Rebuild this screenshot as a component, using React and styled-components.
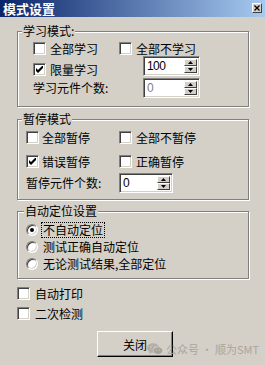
import React from "react";
import styled, { createGlobalStyle } from "styled-components";

const GlobalStyle = createGlobalStyle`
  html, body {
    margin: 0;
    padding: 0;
    background: #d4d0c8;
  }
  body {
    font-family: "Noto Sans CJK SC", "Liberation Sans", sans-serif;
    font-size: 12px;
    line-height: 14px;
    color: #000;
  }
`;

const Dialog = styled.div`
  position: relative;
  width: 265px;
  height: 365px;
  background: #d4d0c8;
  overflow: hidden;
`;

const TitleBar = styled.div`
  height: 17px;
  display: flex;
  align-items: center;
  justify-content: space-between;
  padding: 0 3px 0 3px;
  background: linear-gradient(to right, #0a246a, #a6caf0);
`;

const Title = styled.span`
  color: #fff;
  font-weight: bold;
  font-size: 13px;
  line-height: 17px;
`;

const CloseButton = styled.div`
  box-sizing: border-box;
  width: 10px;
  height: 10px;
  margin-top: -1px;
  background: #d4d0c8;
  border: 1px solid;
  border-color: #fff #404040 #404040 #fff;
  display: flex;
  align-items: center;
  justify-content: center;
`;

const Body = styled.div`
  display: flex;
  flex-direction: column;
  align-items: flex-start;
  padding: 14px 0 0 17px;
`;

const Group = styled.div`
  position: relative;
  box-sizing: border-box;
  width: 232px;
  height: ${(p) => p.$h}px;
  margin-top: ${(p) => p.$mt}px;
  padding: ${(p) => p.$pad};
  border: 1px solid #808080;
  box-shadow: inset 1px 1px 0 #fff, 1px 1px 0 #fff;
  display: flex;
  flex-direction: column;
`;

const Caption = styled.span`
  position: absolute;
  top: -7px;
  left: ${(p) => p.$left}px;
  padding: 0 1px;
  background: #d4d0c8;
  line-height: 12px;
  white-space: nowrap;
`;

const Row = styled.div`
  display: flex;
  align-items: ${(p) => p.$align || "center"};
  height: ${(p) => p.$h}px;
  margin-top: ${(p) => p.$mt || 0}px;
`;

const Cell = styled.div`
  display: flex;
  align-items: center;
  flex-shrink: 0;
  width: ${(p) => (p.$w ? `${p.$w}px` : "auto")};
  height: ${(p) => p.$h || 13}px;
`;

const Box = styled.span`
  box-sizing: border-box;
  width: 13px;
  height: 13px;
  flex-shrink: 0;
  background: #fff;
  border: 1px solid;
  border-color: #808080 #fff #fff #808080;
  box-shadow: inset 1px 1px 0 #404040, inset -1px -1px 0 #d4d0c8;
  display: flex;
  align-items: center;
  justify-content: center;
`;

const RadioDot = styled.span`
  box-sizing: border-box;
  width: 12px;
  height: 12px;
  flex-shrink: 0;
  border-radius: 50%;
  background: #fff;
  border: 1px solid;
  border-color: #808080 #fff #fff #808080;
  box-shadow: inset 1px 1px 0 #404040, inset -1px -1px 0 #d4d0c8;
  display: flex;
  align-items: center;
  justify-content: center;
  &::after {
    content: "";
    width: 4px;
    height: 4px;
    border-radius: 50%;
    background: ${(p) => (p.$on ? "#000" : "transparent")};
  }
`;

const Label = styled.span`
  margin-left: ${(p) => p.$gap || 0}px;
  white-space: nowrap;
`;

const FocusLabel = styled.span`
  margin-left: 3px;
  padding: 0 1px;
  height: 14px;
  line-height: 14px;
  border: 1px dotted ${(p) => (p.$focus ? "#000" : "transparent")};
  white-space: nowrap;
`;

const Spin = styled.div`
  box-sizing: border-box;
  width: ${(p) => p.$w}px;
  height: 20px;
  padding: 2px;
  background: #fff;
  border: 1px solid;
  border-color: #808080 #fff #fff #808080;
  box-shadow: inset 1px 1px 0 #404040, inset -1px -1px 0 #d4d0c8;
  display: flex;
`;

const SpinValue = styled.span`
  flex: 1;
  padding-left: 1px;
  font-family: "Liberation Sans", Arial, sans-serif;
  font-size: 12px;
  letter-spacing: -0.6px;
  line-height: 15px;
  color: ${(p) => (p.$disabled ? "#808080" : "#000")};
`;

const SpinButtons = styled.div`
  width: 13px;
  display: flex;
  flex-direction: column;
`;

const SpinArrow = styled.div`
  flex: 1;
  box-sizing: border-box;
  background: #d4d0c8;
  border: 1px solid;
  border-color: #fff #404040 #404040 #fff;
  display: flex;
  align-items: center;
  justify-content: center;
`;

const PushButton = styled.button`
  box-sizing: border-box;
  width: 76px;
  height: 26px;
  margin: 11px 0 0 80px;
  padding: 0;
  background: #d4d0c8;
  border: 1px solid;
  border-color: #fff #000 #000 #fff;
  box-shadow: inset -1px -1px 0 #808080;
  font-family: "Noto Sans CJK SC", sans-serif;
  font-size: 12px;
  color: #000;
`;

const Watermark = styled.div`
  position: absolute;
  left: 147px;
  top: 342px;
  display: flex;
  align-items: center;
  gap: 3px;
  color: #aaa69e;
  font-size: 11px;
  line-height: 14px;
  white-space: nowrap;
`;

function CheckMark() {
  return (
    <svg width="7" height="7" viewBox="0 0 7 7">
      <polygon points="0,2 2,4 6,0 7,0 7,2 2,7 0,5" fill="#000" />
    </svg>
  );
}

function Check({ label, checked, gap = 4 }) {
  return (
    <>
      <Box>{checked && <CheckMark />}</Box>
      <Label $gap={gap}>{label}</Label>
    </>
  );
}

function Arrow({ up }) {
  return (
    <svg width="5" height="3" viewBox="0 0 5 3">
      <polygon points={up ? "2.5,0 5,3 0,3" : "0,0 5,0 2.5,3"} fill="#000" />
    </svg>
  );
}

function SpinBox({ value, width, disabled }) {
  return (
    <Spin $w={width}>
      <SpinValue $disabled={disabled}>{value}</SpinValue>
      <SpinButtons>
        <SpinArrow>
          <Arrow up />
        </SpinArrow>
        <SpinArrow>
          <Arrow />
        </SpinArrow>
      </SpinButtons>
    </Spin>
  );
}

function Radio({ label, on, focus }) {
  return (
    <Row $h={17}>
      <RadioDot $on={on} />
      <FocusLabel $focus={focus}>{label}</FocusLabel>
    </Row>
  );
}

export default function App() {
  return (
    <Dialog>
      <GlobalStyle />
      <TitleBar>
        <Title>模式设置</Title>
        <CloseButton>
          <svg width="6" height="6" viewBox="0 0 6 6">
            <path d="M0.5 0.5L5.5 5.5M5.5 0.5L0.5 5.5" stroke="#000" strokeWidth="1.3" />
          </svg>
        </CloseButton>
      </TitleBar>

      <Body>
        <Group $h={76} $mt={0} $pad="10px 0 0 15px">
          <Caption $left={4}>学习模式:</Caption>
          <Row $h={13}>
            <Cell $w={86}>
              <Check label="全部学习" />
            </Cell>
            <Cell>
              <Check label="全部不学习" />
            </Cell>
          </Row>
          <Row $h={20} $mt={1} $align="flex-end">
            <Cell $w={110}>
              <Check label="限量学习" checked />
            </Cell>
            <SpinBox value="100" width={57} />
          </Row>
          <Row $h={20} $mt={2}>
            <Cell $w={110}>
              <Label>学习元件个数:</Label>
            </Cell>
            <SpinBox value="0" width={57} disabled />
          </Row>
        </Group>

        <Group $h={81} $mt={12} $pad="11px 0 0 8px">
          <Caption $left={4}>暂停模式</Caption>
          <Row $h={13}>
            <Cell $w={93}>
              <Check label="全部暂停" gap={3} />
            </Cell>
            <Cell>
              <Check label="全部不暂停" />
            </Cell>
          </Row>
          <Row $h={13} $mt={11}>
            <Cell $w={93}>
              <Check label="错误暂停" checked gap={3} />
            </Cell>
            <Cell>
              <Check label="正确暂停" />
            </Cell>
          </Row>
          <Row $h={20} $mt={5}>
            <Cell $w={93}>
              <Label>暂停元件个数:</Label>
            </Cell>
            <SpinBox value="0" width={54} />
          </Row>
        </Group>

        <Group $h={68} $mt={11} $pad="9px 0 0 8px">
          <Caption $left={6}>自动定位设置</Caption>
          <Radio label="不自动定位" on focus />
          <Radio label="测试正确自动定位" />
          <Radio label="无论测试结果,全部定位" />
        </Group>

        <Row $h={13} $mt={8}>
          <Check label="自动打印" gap={5} />
        </Row>
        <Row $h={13} $mt={7}>
          <Check label="二次检测" gap={5} />
        </Row>

        <PushButton>关闭</PushButton>
      </Body>

      <Watermark>
        <svg width="16" height="12" viewBox="0 0 16 12">
          <ellipse cx="6" cy="5" rx="6" ry="4.8" fill="#b4b0a8" />
          <path d="M2.5 8.5L2 11L4.8 9.4z" fill="#b4b0a8" />
          <ellipse cx="11" cy="7.6" rx="4.8" ry="3.8" fill="#a8a49c" stroke="#d4d0c8" strokeWidth="0.8" />
          <circle cx="4" cy="4" r="0.8" fill="#d4d0c8" />
          <circle cx="8" cy="4" r="0.8" fill="#d4d0c8" />
          <circle cx="9.5" cy="7" r="0.6" fill="#d4d0c8" />
          <circle cx="12.5" cy="7" r="0.6" fill="#d4d0c8" />
        </svg>
        <span>公众号 · 顺为SMT</span>
      </Watermark>
    </Dialog>
  );
}
